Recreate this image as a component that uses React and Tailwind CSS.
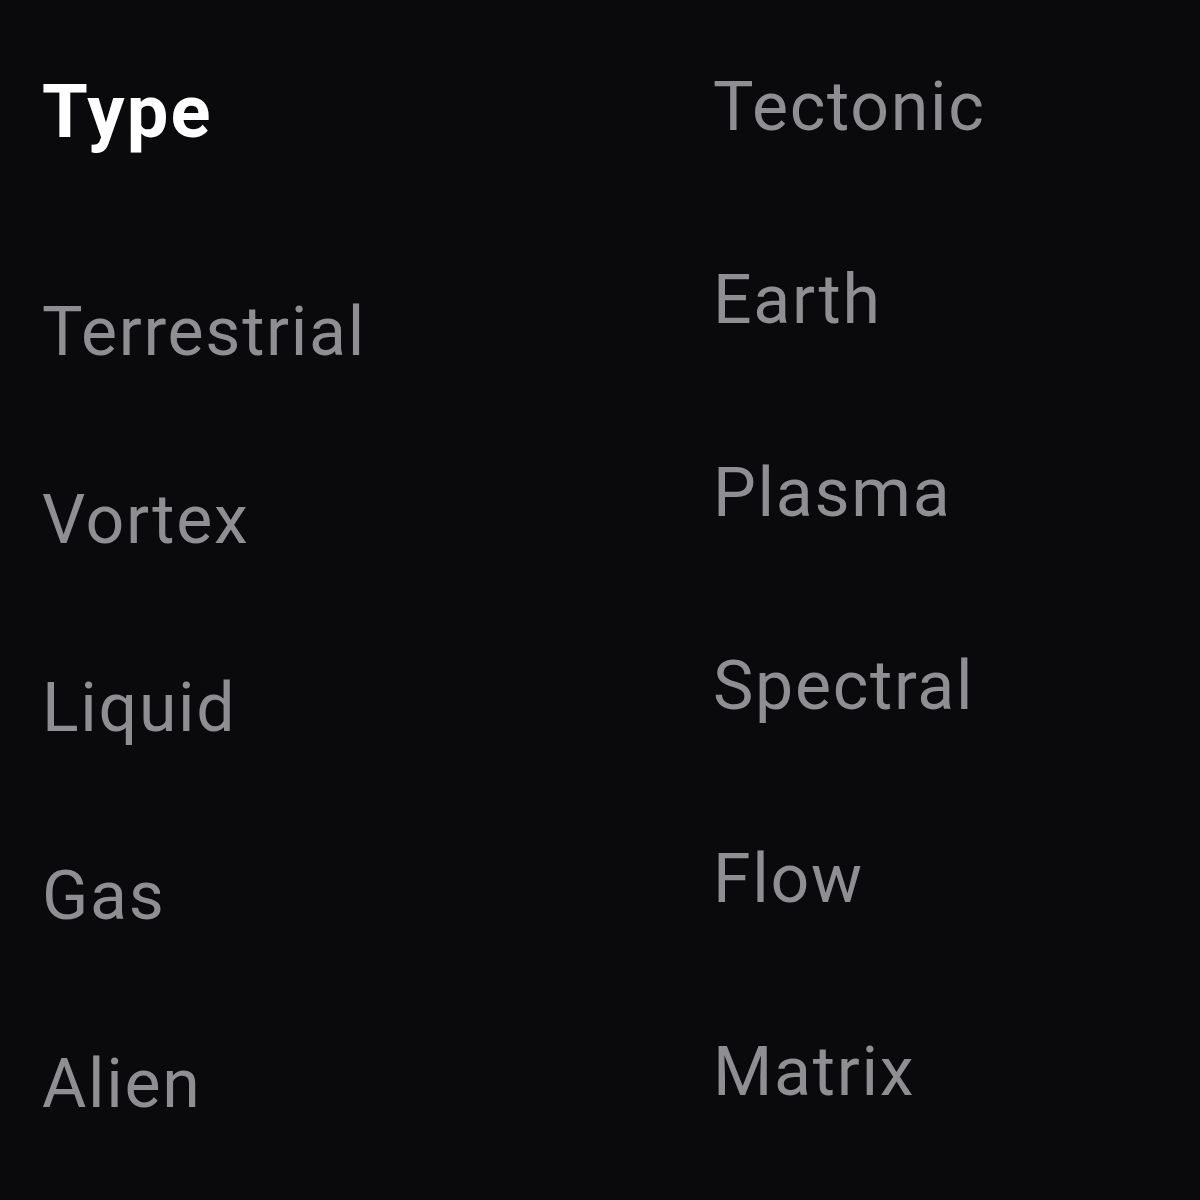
import React from "react";

const left = ["Terrestrial", "Vortex", "Liquid", "Gas", "Alien"];
const right = ["Tectonic", "Earth", "Plasma", "Spectral", "Flow", "Matrix"];

const App = () => {
  return (
    <div
      className="flex min-h-[1200px] w-[1200px] bg-[#0a0a0c]"
      style={{ fontFamily: "Roboto, 'Liberation Sans', sans-serif" }}
    >
      {/* left column: heading + list */}
      <div className="flex w-[713px] shrink-0 flex-col pl-[42px] pt-[75px]">
        <h2 className="text-[74px] font-bold leading-[74px] tracking-[2.2px] text-white">Type</h2>
        <div className="mt-[149px] flex flex-col gap-[120px]">
          {left.map((item) => (
            <div key={item} className="text-[68px] leading-[68px] tracking-[1.7px] text-[#8e8e93]">
              {item}
            </div>
          ))}
        </div>
      </div>

      {/* right column */}
      <div className="flex flex-col gap-[125px] pt-[73px]">
        {right.map((item) => (
          <div key={item} className="text-[68px] leading-[68px] tracking-[1.7px] text-[#8e8e93]">
            {item}
          </div>
        ))}
      </div>
    </div>
  );
};

export default App;
